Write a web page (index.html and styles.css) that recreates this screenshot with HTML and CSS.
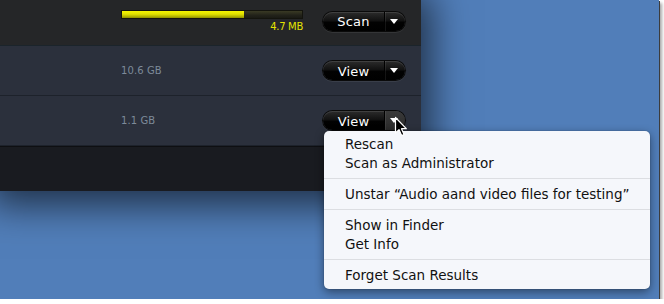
FILE: index.html
```html
<!DOCTYPE html>
<html>
<head>
<meta charset="utf-8">
<link rel="stylesheet" href="styles.css">
</head>
<body>
<div class="shot">
  <div class="window">
    <div class="row row-first">
      <div class="info">
        <div class="bar"><div class="fill" style="width:68%"></div></div>
        <div class="size size-live">4.7 MB</div>
      </div>
      <div class="btn"><span class="btn-label">Scan</span><span class="btn-menu"><span class="tri"></span></span></div>
    </div>
    <div class="row">
      <div class="info"><div class="size">10.6 GB</div></div>
      <div class="btn"><span class="btn-label">View</span><span class="btn-menu"><span class="tri"></span></span></div>
    </div>
    <div class="row">
      <div class="info"><div class="size">1.1 GB</div></div>
      <div class="btn"><span class="btn-label">View</span><span class="btn-menu btn-menu-open"><span class="tri"></span></span></div>
    </div>
    <div class="footer"></div>
  </div>

  <div class="menu">
    <div class="item">Rescan</div>
    <div class="item">Scan as Administrator</div>
    <div class="sep"></div>
    <div class="item">Unstar “Audio aand video files for testing”</div>
    <div class="sep"></div>
    <div class="item">Show in Finder</div>
    <div class="item">Get Info</div>
    <div class="sep"></div>
    <div class="item">Forget Scan Results</div>
  </div>

  <svg class="cursor" width="14" height="22" viewBox="0 0 14 22">
    <path d="M1.5 1.5 L1.5 17 L5 13.6 L7.6 19.6 L10 18.6 L7.5 12.7 L12.3 12.7 Z" fill="#000" stroke="#fff" stroke-width="1.2" stroke-linejoin="round"/>
  </svg>
</div>
</body>
</html>
```
FILE: styles.css
```css
html, body {
  margin: 0;
  padding: 0;
  background: #ffffff;
}

.shot {
  position: relative;
  width: 659px;
  height: 299px;
  overflow: hidden;
  background: #517eb9;
  box-shadow: 1px 1px 0 #3c3c3c, 3px 3px 3px rgba(0, 0, 0, 0.35);
  font-family: "DejaVu Sans", "Liberation Sans", sans-serif;
}

.window {
  width: 421px;
  display: flex;
  flex-direction: column;
  box-shadow: 0 4px 36px 10px rgba(0, 0, 0, 0.62);
}

.row {
  display: flex;
  align-items: center;
  gap: 20px;
  height: 49px;
  padding: 0 16px 0 121px;
  background: #2b303c;
  border-bottom: 1px solid #1d222b;
}

.row-first {
  height: 42px;
  padding-bottom: 3px;
  background: #252628;
  border-bottom: 1px solid #1b242b;
}

.info {
  width: 182px;
  display: flex;
  flex-direction: column;
}

.bar {
  height: 7px;
  border: 1px solid #14140e;
  background: linear-gradient(#3a3a24, #22221a 60%, #1a1a14);
}

.fill {
  height: 100%;
  background: linear-gradient(#f6f600, #e2e200 45%, #b2b200 80%, #8e8e00);
}

.size {
  font-size: 10px;
  line-height: 12px;
  color: #7d8a99;
  letter-spacing: 0.1px;
}

.size-live {
  margin-top: 2px;
  text-align: right;
  color: #e3e300;
  letter-spacing: -0.3px;
}

.btn {
  display: flex;
  width: 82px;
  height: 19px;
  border-radius: 10px;
  overflow: hidden;
  background: linear-gradient(#2c2c2c, #121212 45%, #020202 55%, #000);
  box-shadow: 0 0 0 1px #0a0a0a, 0 1px 0 1px rgba(255, 255, 255, 0.07), inset 0 1px 0 rgba(255, 255, 255, 0.1);
  color: #ffffff;
  font-size: 13px;
}

.btn-label {
  flex: 1;
  display: flex;
  align-items: center;
  justify-content: center;
  padding-top: 1px;
  letter-spacing: 0.2px;
}

.btn-menu {
  width: 18px;
  padding-right: 2px;
  display: flex;
  align-items: center;
  justify-content: center;
  border-left: 1px solid #000;
  box-shadow: inset 1px 0 0 rgba(255, 255, 255, 0.08);
}

.btn-menu-open {
  background: linear-gradient(#3a3a3a, #2a2a2a);
}

.tri {
  width: 0;
  height: 0;
  border-left: 4.5px solid transparent;
  border-right: 4.5px solid transparent;
  border-top: 5px solid #ffffff;
}

.footer {
  height: 44px;
  background: #191b20;
  border-top: 1px solid #0e0f12;
}

.menu {
  position: absolute;
  left: 324px;
  top: 131px;
  width: 326px;
  padding: 4px 0;
  background: #f5f7fb;
  border-radius: 5px;
  box-shadow: 0 3px 10px rgba(0, 0, 0, 0.45), 0 0 0 1px rgba(0, 0, 0, 0.06);
  color: #111111;
  font-size: 13.5px;
}

.item {
  height: 19px;
  line-height: 19px;
  padding-left: 21px;
  white-space: nowrap;
}

.sep {
  height: 1px;
  margin: 5px 0 6px;
  background: #dcdee2;
}

.cursor {
  position: absolute;
  left: 394px;
  top: 116px;
}
```
